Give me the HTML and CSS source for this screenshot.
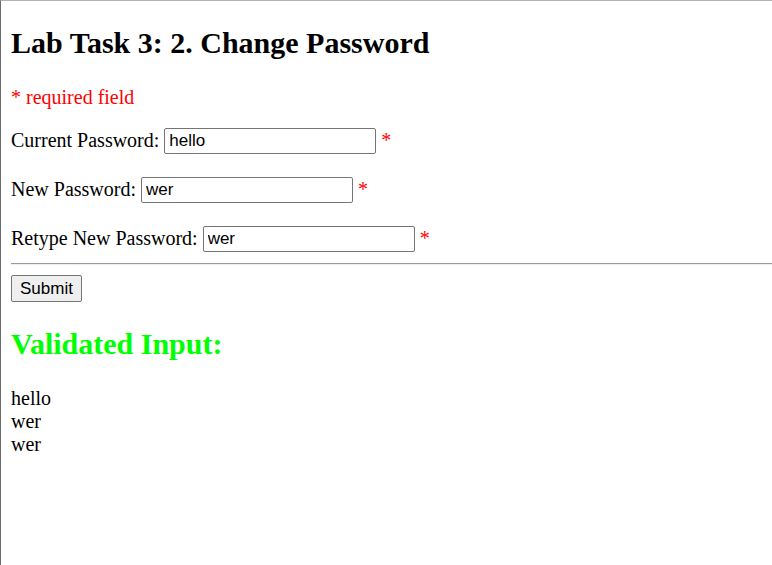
FILE: index.html
```html
<!DOCTYPE html>
<html lang="en">
<head>
<meta charset="utf-8">
<title>Change Password</title>
<link rel="stylesheet" href="styles.css">
</head>
<body>
<main class="page">
  <h2 class="title">Lab Task 3: 2. Change Password</h2>
  <p class="note">* required field</p>
  <form class="form">
    <div class="field">
      <label for="current">Current Password:</label>
      <input class="box" id="current" type="text" value="hello">
      <span class="star">*</span>
    </div>
    <div class="field">
      <label for="new">New Password:</label>
      <input class="box" id="new" type="text" value="wer">
      <span class="star">*</span>
    </div>
    <div class="field">
      <label for="retype">Retype New Password:</label>
      <input class="box" id="retype" type="text" value="wer">
      <span class="star">*</span>
    </div>
    <hr class="rule">
    <button class="submit" type="button">Submit</button>
  </form>
  <h2 class="title result-title">Validated Input:</h2>
  <div class="result">
    <div>hello</div>
    <div>wer</div>
    <div>wer</div>
  </div>
</main>
</body>
</html>
```
FILE: styles.css
```css
* {
  box-sizing: border-box;
}

body {
  margin: 0;
  background: #fff;
  color: #000;
  font-family: "Liberation Serif", "Times New Roman", serif;
  font-size: 20px;
  line-height: 23px;
}

.page {
  min-height: 100vh;
  padding: 25px 0 0 10px;
  border-top: 1px solid #b4b4b4;
  border-left: 1px solid #6c6c6c;
}

.title {
  margin: 0;
  font-size: 30px;
  line-height: 34px;
}

.note {
  margin: 26px 0 19px;
  color: #f00;
}

.form {
  margin: 0;
}

.field {
  display: flex;
  align-items: flex-start;
  gap: 5px;
  margin-bottom: 23px;
  line-height: 25px;
}

.box {
  width: 212px;
  height: 26px;
  padding: 1px 4px;
  border: 1px solid #767676;
  border-radius: 2px;
  background: #fff;
  color: #000;
  font: 17px "Liberation Sans", Arial, sans-serif;
}

.star {
  color: #f00;
}

.rule {
  margin: -12px 0 10px;
  border: 0;
  border-top: 1px solid #9a9a9a;
  border-bottom: 1px solid #eee;
}

.submit {
  display: block;
  height: 27px;
  padding: 1px 8px;
  border: 1px solid #767676;
  border-radius: 2px;
  background: #efefef;
  color: #000;
  font: 17px "Liberation Sans", Arial, sans-serif;
}

.result-title {
  margin: 25px 0 26px;
  color: #0f0;
}
```
